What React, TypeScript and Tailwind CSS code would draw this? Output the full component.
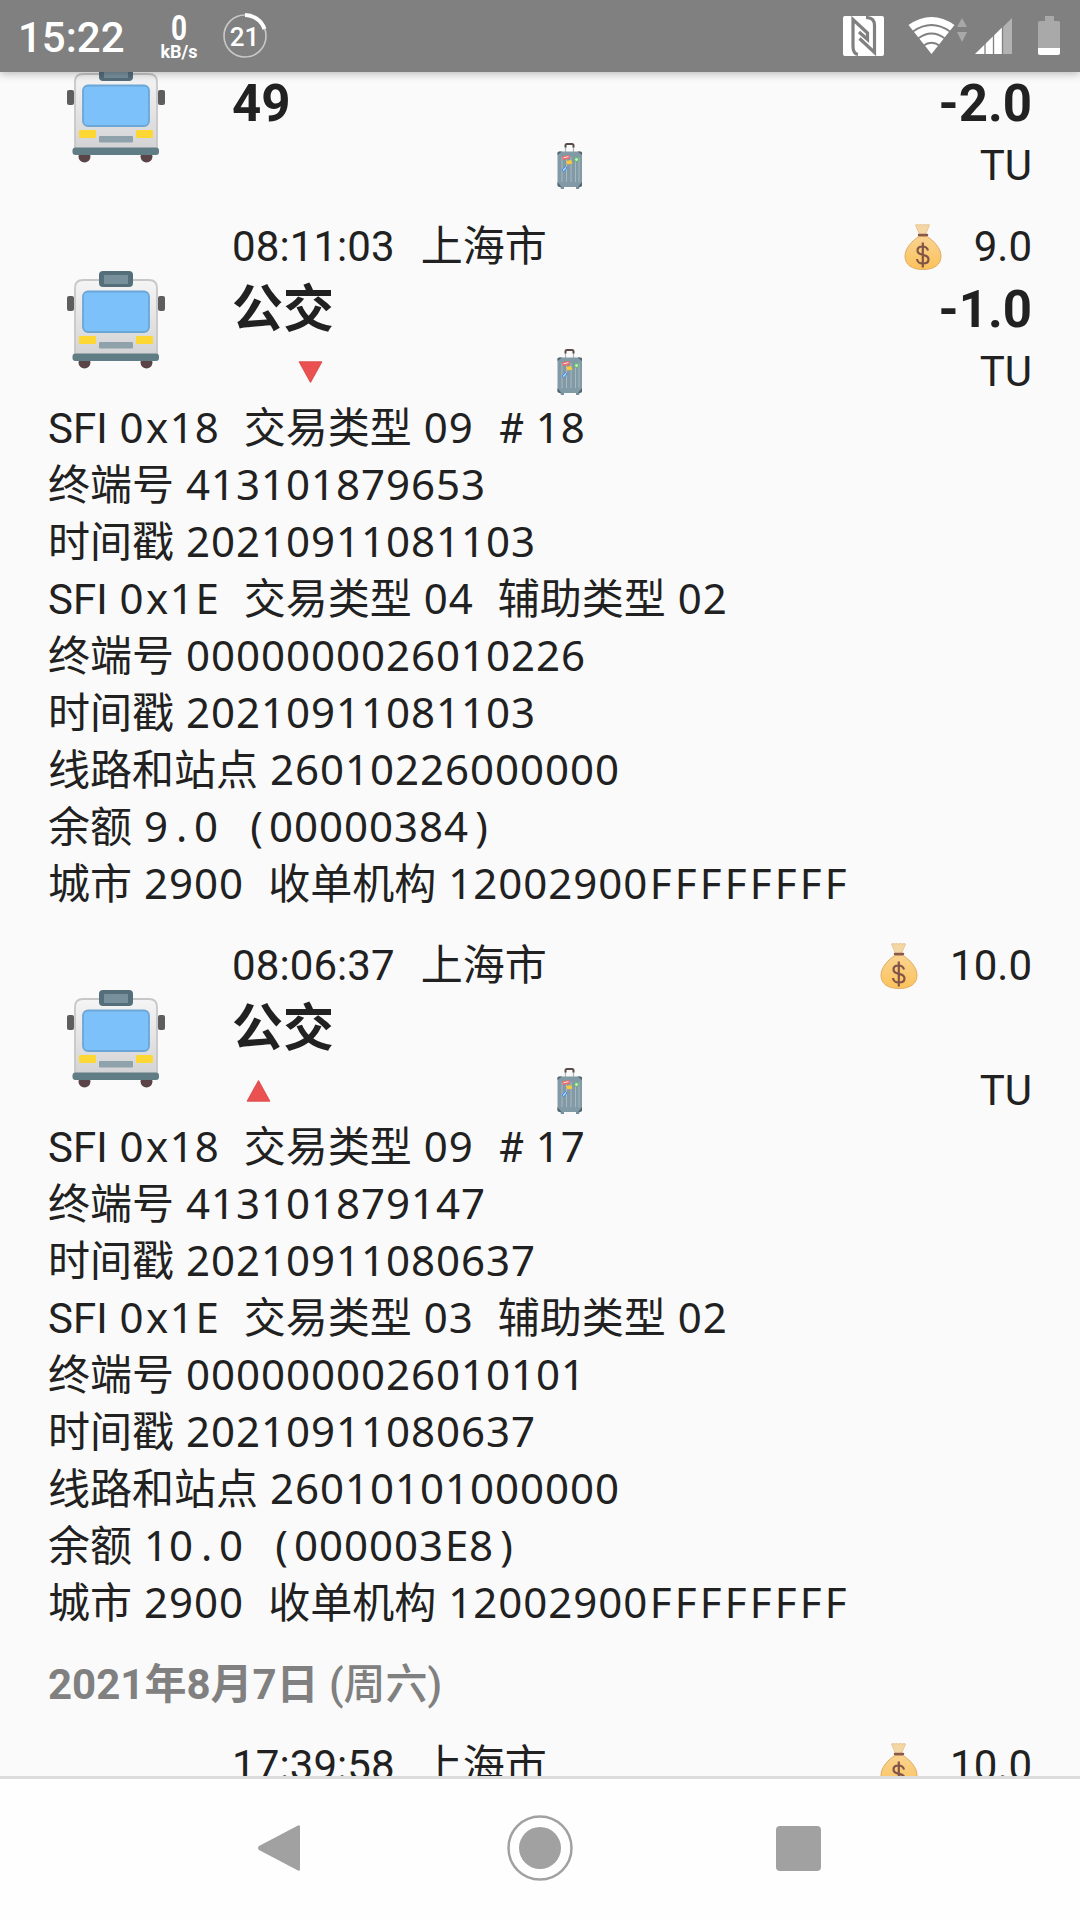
type Field = { label: string; value: string };

type Transit = {
  time?: string;
  title: string;
  balance?: string;
  amount?: string;
  direction?: "in" | "out";
  details?: Field[][];
};

const CITY = "上海市";

const TRANSITS: Transit[] = [
  { title: "49", amount: "-2.0" },
  {
    time: "08:11:03",
    title: "公交",
    balance: "9.0",
    amount: "-1.0",
    direction: "out",
    details: [
      [
        { label: "SFI", value: "0x18" },
        { label: "交易类型", value: "09" },
        { label: "#", value: "18" },
      ],
      [{ label: "终端号", value: "413101879653" }],
      [{ label: "时间戳", value: "20210911081103" }],
      [
        { label: "SFI", value: "0x1E" },
        { label: "交易类型", value: "04" },
        { label: "辅助类型", value: "02" },
      ],
      [{ label: "终端号", value: "0000000026010226" }],
      [{ label: "时间戳", value: "20210911081103" }],
      [{ label: "线路和站点", value: "26010226000000" }],
      [{ label: "余额", value: "9.0 (00000384)" }],
      [
        { label: "城市", value: "2900" },
        { label: "收单机构", value: "12002900FFFFFFFF" },
      ],
    ],
  },
  {
    time: "08:06:37",
    title: "公交",
    balance: "10.0",
    direction: "in",
    details: [
      [
        { label: "SFI", value: "0x18" },
        { label: "交易类型", value: "09" },
        { label: "#", value: "17" },
      ],
      [{ label: "终端号", value: "413101879147" }],
      [{ label: "时间戳", value: "20210911080637" }],
      [
        { label: "SFI", value: "0x1E" },
        { label: "交易类型", value: "03" },
        { label: "辅助类型", value: "02" },
      ],
      [{ label: "终端号", value: "0000000026010101" }],
      [{ label: "时间戳", value: "20210911080637" }],
      [{ label: "线路和站点", value: "26010101000000" }],
      [{ label: "余额", value: "10.0 (000003E8)" }],
      [
        { label: "城市", value: "2900" },
        { label: "收单机构", value: "12002900FFFFFFFF" },
      ],
    ],
  },
];

export default function App() {
  return (
    <div className="flex h-[1920px] w-[1080px] flex-col overflow-hidden bg-[#fafafa] font-[Roboto,'Noto_Sans_CJK_SC',sans-serif] text-[42px] leading-[57px] text-[#212121]">
      <StatusBar />
      <main className="h-[1704px] shrink-0 overflow-hidden">
        <div className="-mt-[3px] flex flex-col gap-6">
          {TRANSITS.map((t, i) => (
            <TransitItem key={i} transit={t} />
          ))}
          <h2 className="pl-12 font-bold text-[#808080]">
            2021年8月7日<span className="font-medium"> (周六)</span>
          </h2>
          <div className="pr-12 pl-[232px]">
            <TimeRow time="17:39:58" balance="10.0" />
          </div>
        </div>
      </main>
      <NavBar />
    </div>
  );
}

function TransitItem({ transit }: { transit: Transit }) {
  const { time, title, balance, amount, direction, details } = transit;
  return (
    <section>
      <div className="flex pr-12 pl-[67px]">
        <div className={`w-[165px] shrink-0 ${time ? "pt-[53px]" : "-mt-1"}`}>
          <BusIcon />
        </div>
        <div className="flex-1">
          {time ? <TimeRow time={time} balance={balance} /> : null}
          <div className="flex h-[68px] justify-between text-[51px] leading-[70px] font-bold">
            <span>{title}</span>
            <span>{amount}</span>
          </div>
          <div className="flex h-[57px]">
            <div className="w-[325px] pt-[18px]">
              {direction === "out" ? (
                <svg className="ml-[66px] h-[22px] w-[25px]" viewBox="0 0 25 22">
                  <path d="M1.5 1h22L12.5 21z" fill="#ec5151" stroke="#e0504f" strokeWidth="1.5" strokeLinejoin="round" />
                </svg>
              ) : null}
              {direction === "in" ? (
                <svg className="ml-[14px] h-[22px] w-[25px]" viewBox="0 0 25 22">
                  <path d="M1.5 21h22L12.5 1z" fill="#ec5151" stroke="#e0504f" strokeWidth="1.5" strokeLinejoin="round" />
                </svg>
              ) : null}
            </div>
            <LuggageIcon />
            <span className="ml-auto">TU</span>
          </div>
        </div>
      </div>
      {details ? (
        <ul className="pl-12">
          {details.map((fields, i) => (
            <li key={i} className="h-[57px] whitespace-pre [word-spacing:1.6px]">
              {fields.map((f, j) => (
                <span key={j}>
                  {j > 0 ? "  " : ""}
                  {f.label} <Mono text={f.value} />
                </span>
              ))}
            </li>
          ))}
        </ul>
      ) : null}
    </section>
  );
}

function TimeRow({ time, balance }: { time: string; balance?: string }) {
  return (
    <div className="flex h-[57px]">
      <span className="tracking-[0.1px]">{time}</span>
      <span className="ml-[26px]">{CITY}</span>
      <span className="mr-8 ml-auto pt-1.5">
        <MoneyIcon />
      </span>
      <span>{balance}</span>
    </div>
  );
}

// Digits share one width already; everything else gets its own 25px cell.
function Mono({ text }: { text: string }) {
  return (
    <span className="font-['Noto_Sans',sans-serif] leading-none tracking-[0.98px]">
      {text.split(/(\d+)/).map((run, i) =>
        /\d/.test(run)
          ? run
          : [...run].map((ch, j) => (
              <span key={`${i}-${j}`} className="inline-block w-[25px] text-center tracking-normal">
                {ch}
              </span>
            ))
      )}
    </span>
  );
}

function StatusBar() {
  return (
    <header className="relative z-10 flex h-[72px] shrink-0 bg-[#808080] text-white shadow-[0_2px_8px_rgba(0,0,0,0.25)]">
      <span className="w-[158px] pt-[9px] pl-[18px] font-medium">15:22</span>
      <div className="flex w-[42px] flex-col items-center pt-3 font-bold">
        <span className="scale-x-80 text-[35px] leading-[33px]">0</span>
        <span className="text-[18px] leading-[14px]">kB/s</span>
      </div>
      <svg className="mt-3 ml-[22px] h-[48px] w-[48px]" viewBox="0 0 48 48" fill="none">
        <circle cx="23" cy="24" r="21" stroke="#c8c8c8" strokeWidth="1.6" />
        <path d="M23 3a21 21 0 0 1 19.5 14" stroke="#fff" strokeWidth="4" />
        <text x="22.5" y="33.5" textAnchor="middle" fontSize="26" fontWeight="500" fill="#fff">21</text>
      </svg>
      <div className="ml-auto flex pt-4 pr-5">
        <NfcIcon />
        <svg className="ml-6 h-10 w-[60px]" viewBox="0 0 60 40">
          <path d="M23.500 38L.5 9q23-16 46 0z" fill="#fff" />
          <g fill="none" stroke="#808080" strokeWidth="1.8">
            <path d="M5 15.500q18.500-13 37 0" />
            <path d="M10 22.500q13.500-10 27 0" />
            <path d="M15 30q8.500-6.500 17 0" />
          </g>
          <path d="M54 2l5 9H49zM49 16h10l-5 10z" fill="#a8a8a8" />
        </svg>
        <svg className="ml-1.5 h-10 w-[40px]" viewBox="0 0 40 40">
          <path d="M38 2v36h-9V11z" fill="#b2b2b2" />
          <path d="M28.500 11v27H1z" fill="#fff" />
          <path d="M11 27v11M19.500 19v19M28.500 10v28" stroke="#808080" strokeWidth="1.3" />
        </svg>
        <svg className="ml-6 h-10 w-[22px]" viewBox="0 0 22 40">
          <path d="M7 0h9v5h4.500q1.500 0 1.500 2v25H0V7q0-2 2-2h5z" fill="#a9a9a9" />
          <path d="M0 32h22v5q0 2-2 2H2q-2 0-2-2z" fill="#fff" />
        </svg>
      </div>
    </header>
  );
}

function NfcIcon() {
  return (
    <svg className="h-10 w-[41px]" viewBox="0 0 41 40">
      <rect width="41" height="40" rx="2" fill="#fff" />
      <g fill="none" stroke="#808080" strokeWidth="3.2">
        <path d="M15 38.500q-5-1-5-8V3.500L24.500 17v6.500L16 16" />
        <path d="M23 1.500q8.500 0 8.500 8v27L16.500 22.500" />
      </g>
    </svg>
  );
}

function NavBar() {
  return (
    <nav className="flex h-[144px] shrink-0 items-center border-t-[3px] border-[#dcdcdc] bg-[#fefefe] pb-[3px] pl-[257px]">
      <svg className="h-12 w-11" viewBox="0 0 44 48">
        <path d="M41 1.500Q43 .5 43 3v42q0 2.500-2 1.500L2 26Q0 24 2 22z" fill="#a1a1a1" />
      </svg>
      <svg className="ml-[205px] h-[68px] w-[68px]" viewBox="0 0 68 68">
        <circle cx="34" cy="34" r="31.500" fill="none" stroke="#a1a1a1" strokeWidth="2.500" />
        <circle cx="34" cy="34" r="21" fill="#a1a1a1" />
      </svg>
      <span className="ml-[202px] h-[45px] w-[45px] rounded bg-[#a1a1a1]" />
    </nav>
  );
}

function BusIcon() {
  return (
    <svg className="h-[98px] w-[98px]" viewBox="0 0 98 98">
      <defs>
        <linearGradient id="busBody" x1="0" y1="0" x2="0" y2="1">
          <stop offset="0" stopColor="#f5f5f5" />
          <stop offset="1" stopColor="#d3d3d5" />
        </linearGradient>
      </defs>
      <circle cx="17.500" cy="91.500" r="6" fill="#5b4448" />
      <circle cx="79.500" cy="91.500" r="6" fill="#5b4448" />
      <rect x="0" y="25" width="7" height="15" rx="2" fill="#5e5e5e" />
      <rect x="91" y="25" width="7" height="15" rx="2" fill="#5e5e5e" />
      <path d="M8 84V17q0-8 8-8h66q8 0 8 8v67z" fill="url(#busBody)" stroke="#c7c7c7" strokeWidth="1.800" />
      <rect x="32" y="0" width="34" height="16" rx="4" fill="#546e7a" />
      <rect x="37" y="4" width="24" height="9" rx="1" fill="#78909c" />
      <rect x="16" y="20.500" width="66" height="40.500" rx="5" fill="#7cc1fa" stroke="#6ba6d6" strokeWidth="1.800" />
      <rect x="12" y="65" width="17" height="8" rx="1" fill="#fdd835" />
      <rect x="69" y="65" width="17" height="8" rx="1" fill="#fdd835" />
      <rect x="32" y="71" width="34" height="6.500" rx="1" fill="#8fa1aa" />
      <rect x="5.500" y="82.500" width="86.500" height="7.500" rx="3" fill="#607d86" />
    </svg>
  );
}

function LuggageIcon() {
  return (
    <svg className="mt-1.5 h-[46px] w-[26px]" viewBox="0 0 26 46">
      <path d="M8.500 9V3.500M16.500 9V3.500" stroke="#b0b4b6" strokeWidth="1.200" />
      <path d="M8.500 4.500V2.500q0-1.500 1.500-1.500h5q1.500 0 1.500 1.500v2" fill="none" stroke="#5a4a48" strokeWidth="2" />
      <path d="M3 43h4v3H4zM19 43h4l-1 3h-3z" fill="#78909c" />
      <rect x=".5" y="8.500" width="24.500" height="35.500" rx="2.500" fill="#829aa5" />
      <path d="M5 14v25M9.500 14v25M14 14v25M18.500 14v25M22 14v25" stroke="#a6b8c0" strokeWidth="1" />
      <path d="M.5 12V9.500Q.5 8.500 3 8.500h2zM25 12V9.500q0-1-2.500-1h-2zM.5 39v3q0 2 4 2zM25 39v3q0 2-4 2z" fill="#53646c" />
      <path d="M5 13.500l7-1.500 1 3.500-7 1.500z" fill="#ef6b68" />
      <path d="M6.500 14.700l5-1" stroke="#fde3e0" strokeWidth="1" />
      <path d="M9 18l5-1 1.500 3.500-5 1z" fill="#fcc93a" />
      <circle cx="19.500" cy="16.500" r="2" fill="#b6f3b5" stroke="#4fae57" strokeWidth=".8" />
      <path d="M5 27l3.500-3.500L10 25l-3.500 4z" fill="#a5cffb" stroke="#4c8be0" strokeWidth="1" />
    </svg>
  );
}

function MoneyIcon() {
  return (
    <svg className="h-[46px] w-[38px]" viewBox="0 0 38 46">
      <defs>
        <linearGradient id="bag" x1="0" y1="0" x2="0" y2="1">
          <stop offset="0" stopColor="#f8d391" />
          <stop offset="1" stopColor="#fcc25a" />
        </linearGradient>
      </defs>
      <path d="M11.500 1q1.500-1 3 0 2-1 4 0 2-1 4 0 1.500-1 3 0l-4 9.500h-6z" fill="#f5d7a5" stroke="#e3bd88" strokeWidth=".8" />
      <path d="M15 12.500C9 16 1 24 1 32c0 9 7 13.500 18 13.500S37 41 37 32c0-8-8-16-14-19.500z" fill="url(#bag)" stroke="#e0ad67" strokeWidth="1" />
      <path d="M15 11h8" stroke="#86594b" strokeWidth="2.500" strokeLinecap="round" />
      <path d="M24 26.500q-1-4-5.500-4-5 0-5 4 0 3.300 5.300 4.300 5.700 1 5.700 4.600 0 4.100-5.700 4.100-5.300 0-5.800-4.500M18.800 18.500v25" fill="none" stroke="#825447" strokeWidth="2.200" />
    </svg>
  );
}
